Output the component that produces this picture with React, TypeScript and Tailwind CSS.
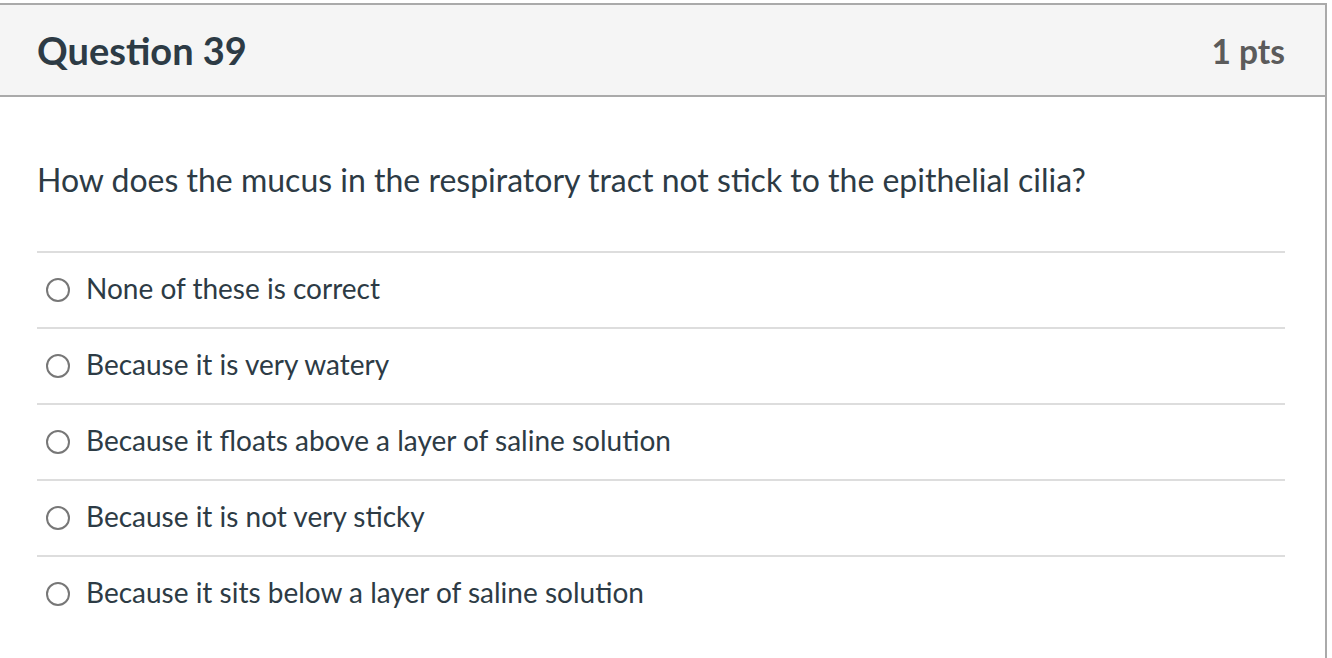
import React from "react";

const options = [
  "None of these is correct",
  "Because it is very watery",
  "Because it floats above a layer of saline solution",
  "Because it is not very sticky",
  "Because it sits below a layer of saline solution",
];

export default function App() {
  return (
    <div
      className="w-[1332px] h-[658px] overflow-hidden bg-white"
      style={{ fontFamily: "Lato, 'Open Sans', sans-serif" }}
    >
      <div className="mt-[3px] w-[1327px] border-t-2 border-r-2 border-[#aaaaaa] h-[700px]">
        <div className="h-[90px] bg-[#f5f5f5] border-b-2 border-[#aaaaaa] box-content flex items-center justify-between pl-[37px] pr-[40px]">
          <h2 className="text-[38px] font-bold text-[#2d3b45] leading-none">Question 39</h2>
          <div className="mt-[4px] text-[33.5px] font-bold text-[#5b5b5b] leading-none">1 pts</div>
        </div>
        <div className="pl-[37px] pr-[40px]">
          <p className="pt-[61px] text-[32px] leading-[44px] text-[#2d3b45]">
            How does the mucus in the respiratory tract not stick to the epithelial cilia?
          </p>
          <div className="mt-[49px]">
            {options.map((o) => (
              <div key={o} className="border-t-2 border-[#dddddd] h-[76px] flex items-center">
                <span className="ml-[9px] mb-[1px] w-[24px] h-[24px] rounded-full border-2 border-[#777777] bg-white shrink-0" />
                <span className="ml-[16px] mb-[4px] text-[28px] text-[#2d3b45] leading-none">{o}</span>
              </div>
            ))}
          </div>
        </div>
      </div>
    </div>
  );
}
